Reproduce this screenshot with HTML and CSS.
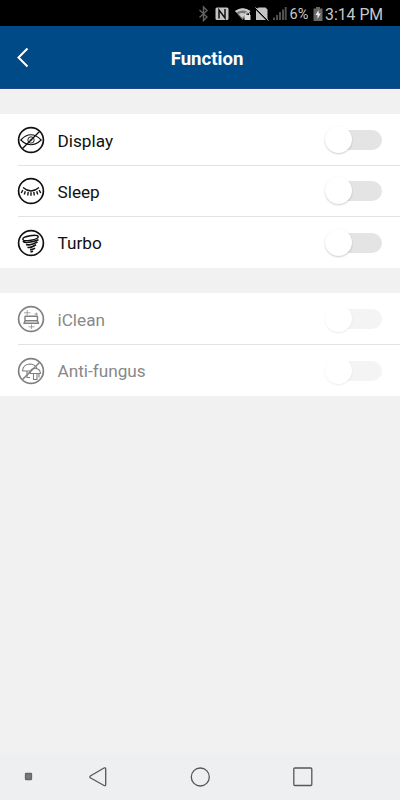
FILE: index.html
```html
<!DOCTYPE html>
<html lang="en">
<head>
	<meta charset="UTF-8">
	<title>Function</title>
	<link rel="stylesheet" href="styles.css">
</head>
<body>
	<div class="status">
		<svg class="status-icons" width="98" height="26" viewBox="190 0 98 26">
			<!-- bluetooth -->
			<path d="M199.500 10l7.500 7-3.500 3.500V7l3.500 3.500-7.500 7" fill="none" stroke="#626262" stroke-width="1.400"/>
			<!-- nfc -->
			<rect x="215.500" y="7.500" width="13" height="12.500" rx="1.500" fill="#c4c4c4"/>
			<path d="M219 18.500V10l6 8V9" fill="none" stroke="#111" stroke-width="1.500"/>
			<!-- wifi -->
			<path d="M235 11q7.500-5.500 15.500 0l-8 9z" fill="#777"/>
			<path d="M235 11q7.500-5.500 15.500 0l-1.500 1.500q-6-4-12.500 0zM238.500 14q4-2 7 0l-3 4z" fill="#ccc"/>
			<path d="M245.500 15.500v-1.500a2 2 0 0 1 4 0v1.500" fill="none" stroke="#ddd"/>
			<rect x="244.500" y="15" width="6" height="5" fill="#ddd"/>
			<!-- no sim -->
			<path d="M258.500 7.500h7l2 2V20h-11.500V9.500z" fill="#c4c4c4"/>
			<path d="M255.500 8.500l12.500 12.500" stroke="#000" stroke-width="1.600"/>
			<path d="M255.500 7.500l13 13" stroke="#c4c4c4" stroke-width="1"/>
			<!-- signal -->
			<path d="M274 20v-2.500M277 20v-5M280 20v-8M283 20V9.500M285.700 20V7" stroke="#505050" stroke-width="2"/>
		</svg>
		<span class="percent">6%</span>
		<svg class="battery" width="10" height="14" viewBox="0 0 10 14">
			<path d="M3 0h4v1.500h2.500V14h-9V1.500H3z" fill="#686868"/>
			<path d="M5.500 3L2.500 8h2v4l3.200-5.500h-2z" fill="#eee"/>
		</svg>
		<span class="time">3:14 PM</span>
	</div>

	<div class="header">
		<svg class="back" width="14" height="22" viewBox="0 0 14 22">
			<path d="M11.500 1.500L2.500 10.500l9 9" fill="none" stroke="#fff" stroke-width="2"/>
		</svg>
		<h1>Function</h1>
	</div>

	<div class="list">
		<div class="row">
			<svg class="icon" viewBox="0 0 28 28">
				<circle cx="14" cy="14" r="12.400" stroke-width="1.700"/>
				<path d="M3.800 14q10-10.500 20.400 0q-10.400 9.500-20.400 0z" stroke-width="1.100"/>
				<circle cx="14" cy="14" r="3.200" stroke-width=".9"/>
				<circle cx="14" cy="14" r="1" stroke-width=".5"/>
				<path d="M5.500 22.500l17-17" stroke-width="1.200"/>
			</svg>
			<div class="cell">
				<span class="name">Display</span>
				<div class="switch"></div>
			</div>
		</div>
		<div class="row">
			<svg class="icon" viewBox="0 0 28 28">
				<circle cx="14" cy="14" r="12.400" stroke-width="1.700"/>
				<path d="M6 10.500q8 7 16 0" stroke-width="1.300"/>
				<path d="M5.800 13l-1.500 3M8.300 14.200l-1 3.300M11.200 15l-.5 3.500M14 15.300v3.500M16.800 15l.5 3.500M19.700 14.200l1 3.300M22.200 13l1.500 3" stroke-width="1.400"/>
			</svg>
			<div class="cell">
				<span class="name">Sleep</span>
				<div class="switch"></div>
			</div>
		</div>
		<div class="row">
			<svg class="icon" viewBox="0 0 28 28">
				<circle cx="14" cy="14" r="12.400" stroke-width="1.700"/>
				<ellipse cx="13.500" cy="9" rx="7.800" ry="2.300" transform="rotate(-10 13.500 9)" stroke-width="1.400"/>
				<path d="M6 12q2 3.500 15.500-1.200M9 15.500q3 1.500 11.500-2.500M10.500 18.300q3 1 8.500-2.500M13 20.600q2.500.3 5-1.500M13.500 23l2.500-.8" stroke-width="1.700"/>
			</svg>
			<div class="cell">
				<span class="name">Turbo</span>
				<div class="switch"></div>
			</div>
		</div>
	</div>

	<div class="list disabled">
		<div class="row">
			<svg class="icon" viewBox="0 0 28 28">
				<circle cx="14" cy="14" r="12.400" stroke-width="1.700"/>
				<rect x="8" y="11.300" width="12.500" height="4.400" rx=".5" stroke-width="1.400"/>
				<path d="M8 15.700l-.9 2.600h14.300l-.9-2.600" stroke-width="1.400"/>
				<path d="M7 7.800h6.500M10.200 5v5M17.500 9h3.500M19.300 7.500v3M11.500 21.800h6M14.500 19.500v4.500" stroke-width=".7"/>
			</svg>
			<div class="cell">
				<span class="name">iClean</span>
				<div class="switch"></div>
			</div>
		</div>
		<div class="row">
			<svg class="icon" viewBox="0 0 28 28">
				<circle cx="14" cy="14" r="12.400" stroke-width="1.700"/>
				<path d="M5.500 14q.5-6.500 7-7q5.500 0 7.500 4.500M5.500 14h8M10 14v6.500h3M13 16.500q0-5 5-5t5.500 5zM16.500 16.500V22.500h3.500V16.500M22 17v3.500" stroke-width="1.100"/>
				<path d="M5.500 22.500l17-17" stroke-width="1.400"/>
			</svg>
			<div class="cell">
				<span class="name">Anti-fungus</span>
				<div class="switch"></div>
			</div>
		</div>
	</div>

	<div class="navbar">
		<svg width="400" height="47" viewBox="0 0 400 47">
			<rect x="25.500" y="20.500" width="6" height="6" rx=".5" fill="#777976" stroke="#666"/>
			<path d="M104 15L90.700 22.700q-1.700 1.200 0 2.300L104 32.500q1.700.7 1.700-1V16q0-1.700-1.700-1z"/>
			<circle cx="200.300" cy="24" r="9"/>
			<rect x="293.800" y="15" width="18" height="17.500" rx="1"/>
		</svg>
	</div>
</body>
</html>
```

FILE: styles.css
```css
*{
	margin: 0;
	padding: 0;
	box-sizing: border-box;
}
body{
	display: flex;
	flex-direction: column;
	height: 800px;
	background: #f1f1f1;
	font-family: Roboto, "Liberation Sans", sans-serif;
	color: #111;
}
svg{
	display: block;
	flex: none;
}
.status{
	display: flex;
	align-items: center;
	height: 26px;
	padding-left: 190px;
	background: #000;
	color: #c8c8c8;
	white-space: nowrap;
}
.percent{
	width: 25px;
	padding: 3px 0 0 1.5px;
	font-size: 14.5px;
}
.battery{
	margin-top: 2px;
}
.time{
	padding: 3px 0 0 2px;
	font-size: 15.8px;
}
.header{
	display: grid;
	grid-template-columns: 46px 1fr 32px;
	align-items: center;
	height: 63px;
	background: #004b87;
	border-bottom: 1px solid #27478a;
	color: #fff;
}
.back{
	margin: 2px 0 0 16px;
}
h1{
	padding-top: 3px;
	font-size: 18.6px;
	font-weight: 700;
	line-height: 22px;
	text-align: center;
}
.list{
	margin-top: 25px;
	background: #fff;
}
.row{
	display: flex;
	height: 51px;
	padding-left: 17px;
}
.row:last-child{
	height: 52px;
}
.icon{
	width: 28px;
	height: 28px;
	margin-top: 12px;
	fill: none;
	stroke: #111;
}
.row:last-child .icon{
	margin-top: 12.6px;
}
.cell{
	display: flex;
	flex: 1;
	justify-content: space-between;
	margin-left: -27px;
	padding: 0 18px 0 39.500px;
}
.row + .row .cell{
	border-top: 1px solid #e2e2e2;
}
.row + .row .switch{
	margin-top: 15px;
}
.row:last-child .switch{
	margin-top: 15.5px;
}
.row + .row .name{
	padding-top: 15px;
}
.name{
	padding-top: 16px;
	font-size: 17.2px;
	line-height: 22px;
}
.switch{
	width: 48px;
	height: 20px;
	margin-top: 16px;
	border-radius: 10px;
	background: #e4e4e4;
}
.switch::before{
	content: "";
	display: block;
	width: 27px;
	height: 27px;
	margin-left: -9px;
	border-radius: 50%;
	background: #fff;
	box-shadow: 0 1px 2px rgba(0,0,0,.2);
	transform: translateY(-4px);
}
.disabled .icon{
	stroke: #808080;
}
.disabled .name{
	color: #888;
}
.disabled .switch{
	background: #f4f4f4;
}
.disabled .switch::before{
	box-shadow: 0 1px 2px rgba(0,0,0,.08);
}
.navbar{
	height: 47px;
	margin-top: auto;
	background: #eeeff1;
}
.navbar svg{
	fill: none;
	stroke: #555759;
	stroke-width: 1.3;
}
```
